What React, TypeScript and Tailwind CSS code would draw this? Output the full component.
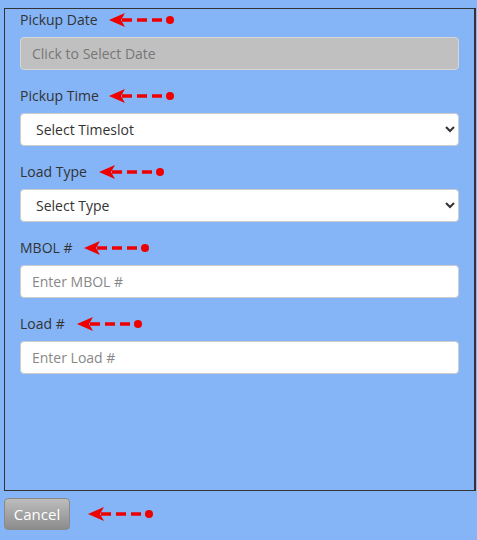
const Arrow = ({ className = "" }: { className?: string }) => (
  <svg width="66" height="16" viewBox="0 0 66 16" className={className}>
    <path d="M0 8 L16 1 L12 8 L16 15 Z" fill="#ee0000" />
    <line x1="13" y1="8" x2="58" y2="8" stroke="#ee0000" strokeWidth="3.5" strokeDasharray="10 5" />
    <circle cx="61" cy="8" r="4" fill="#ee0000" />
  </svg>
)

type FieldProps = {
  label: string
  arrowGap: string
  children: React.ReactNode
}

const Field = ({ label, arrowGap, children }: FieldProps) => (
  <div className="mb-[16px]">
    <div className="mb-[7px] flex h-[20px] items-center">
      <span className="text-[14px] leading-[20px] text-[#333]">{label}</span>
      <Arrow className={arrowGap} />
    </div>
    {children}
  </div>
)

const inputClass =
  "block h-[33px] w-full rounded-[4px] border border-[#ccc] bg-white px-[11px] text-[14px] text-[#555] placeholder:text-[#888] outline-none"

export default function App() {
  return (
    <div
      className="min-h-[540px] w-[477px] bg-[#85b5f7] pt-[8px]"
      style={{ fontFamily: '"Open Sans", "Liberation Sans", sans-serif' }}
    >
      <div className="ml-[4px] h-[483px] w-[472px] border border-r-2 border-[#333] px-[15px] pt-[1px]">
        <Field label="Pickup Date" arrowGap="ml-[11px]">
          <input
            readOnly
            placeholder="Click to Select Date"
            className="block h-[33px] w-full rounded-[4px] border border-[#d6d6d6] bg-[#c0c0c0] px-[11px] text-[14px] placeholder:text-[#777] outline-none"
          />
        </Field>
        <Field label="Pickup Time" arrowGap="ml-[10px]">
          <select className="block h-[33px] w-full rounded-[4px] border border-[#ccc] bg-white px-[11px] text-[14px] text-[#333] outline-none">
            <option>Select Timeslot</option>
          </select>
        </Field>
        <Field label="Load Type" arrowGap="ml-[12px]">
          <select className="block h-[33px] w-full rounded-[4px] border border-[#ccc] bg-white px-[11px] text-[14px] text-[#333] outline-none">
            <option>Select Type</option>
          </select>
        </Field>
        <Field label="MBOL #" arrowGap="ml-[11px]">
          <input placeholder="Enter MBOL #" className={inputClass} />
        </Field>
        <Field label="Load #" arrowGap="ml-[12px]">
          <input placeholder="Enter Load #" className={inputClass} />
        </Field>
      </div>
      <div className="mt-[7px] flex items-center pl-[4px]">
        <button
          type="button"
          className="h-[32px] w-[66px] rounded-[4px] border border-[#8a8a8a] bg-gradient-to-b from-[#bdbdbd] to-[#8c8c8c] text-[15px] text-white"
        >
          Cancel
        </button>
        <Arrow className="ml-[18px]" />
      </div>
    </div>
  )
}
